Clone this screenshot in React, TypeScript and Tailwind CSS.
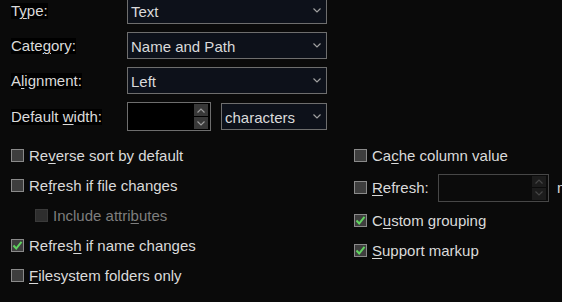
import React from "react";

function Chevron({ up = false, color = "#a0a0a0" }: { up?: boolean; color?: string }) {
  return (
    <svg width="8" height="5" viewBox="0 0 8 5" className="block">
      <path
        d={up ? "M0.5 4.5 L4 1 L7.5 4.5" : "M0.5 0.5 L4 4 L7.5 0.5"}
        fill="none"
        stroke={color}
        strokeWidth="1.2"
      />
    </svg>
  );
}

function Combo({ text, width }: { text: string; width: string }) {
  return (
    <div
      className={`${width} h-[27px] flex items-center justify-between border border-[#6e6e6e] bg-[#0d111a] pl-[3px] pr-[5px]`}
    >
      <span className="leading-none pt-[2px]">{text}</span>
      <Chevron />
    </div>
  );
}

function Spinner({ disabled = false }: { disabled?: boolean }) {
  return (
    <div
      className={`flex justify-end items-stretch border ${
        disabled ? "border-[#474747] bg-[#0b0b0b] w-[111px] h-[28px]" : "border-[#6e6e6e] bg-black w-[84px] h-[29px]"
      } p-[1px] pr-[2px]`}
    >
      <div className="flex flex-col gap-[1px] w-[14px]">
        <div
          className={`flex-1 flex items-center justify-center ${disabled ? "bg-[#1c1c1c]" : "bg-[#383838]"}`}
        >
          <Chevron up color={disabled ? "#454545" : "#9a9a9a"} />
        </div>
        <div
          className={`flex-1 flex items-center justify-center ${disabled ? "bg-[#1c1c1c]" : "bg-[#383838]"}`}
        >
          <Chevron color={disabled ? "#454545" : "#9a9a9a"} />
        </div>
      </div>
    </div>
  );
}

function Check({ checked = false, disabled = false }: { checked?: boolean; disabled?: boolean }) {
  return (
    <div
      className={`w-[13px] h-[13px] shrink-0 border ${
        disabled ? "border-[#3a3a3a] bg-[#2e2e2e]" : "border-[#8a8a8a] bg-[#3e3e3e]"
      } flex items-center justify-center`}
    >
      {checked && (
        <svg width="11" height="11" viewBox="0 0 11 11" className="block">
          <path d="M1.5 5.5 L4.2 8.5 L9.5 1.8" fill="none" stroke="#5fd35f" strokeWidth="2" />
        </svg>
      )}
    </div>
  );
}

function CheckRow({
  children,
  checked = false,
  disabled = false,
  className = "",
}: {
  children: React.ReactNode;
  checked?: boolean;
  disabled?: boolean;
  className?: string;
}) {
  return (
    <div className={`h-[30px] flex items-center gap-[5px] ${className}`}>
      <Check checked={checked} disabled={disabled} />
      <span className={`leading-none whitespace-nowrap ${disabled ? "text-[#7e7e7e]" : ""}`}>{children}</span>
    </div>
  );
}

function Label({ children }: { children: React.ReactNode }) {
  return (
    <div className="w-[116px] shrink-0 pt-[2px]">
      <span className="inline-block bg-black leading-[16px] whitespace-nowrap">{children}</span>
    </div>
  );
}

const U = ({ children }: { children: React.ReactNode }) => (
  <u className="underline underline-offset-2 decoration-1">{children}</u>
);

export default function App() {
  return (
    <div className="w-[562px] h-[302px] overflow-hidden bg-[#0a0a0a] text-[15px] text-[#dadada] font-['Liberation_Sans',Arial,sans-serif]">
      <div className="-mt-[3px] pl-[11px] flex flex-col gap-[8px]">
        <div className="flex items-center h-[27px]">
          <Label>
            T<U>y</U>pe:
          </Label>
          <Combo text="Text" width="w-[200px]" />
        </div>
        <div className="flex items-center h-[27px]">
          <Label>
            Cate<U>g</U>ory:
          </Label>
          <Combo text="Name and Path" width="w-[200px]" />
        </div>
        <div className="flex items-center h-[27px]">
          <Label>
            A<U>l</U>ignment:
          </Label>
          <Combo text="Left" width="w-[200px]" />
        </div>
        <div className="flex items-center h-[29px]">
          <Label>
            Default <U>w</U>idth:
          </Label>
          <Spinner />
          <div className="ml-[10px]">
            <Combo text="characters" width="w-[106px]" />
          </div>
        </div>
      </div>

      <div className="mt-[9px] flex">
        <div className="w-[354px] shrink-0 pl-[11px] flex flex-col">
          <CheckRow>
            Re<U>v</U>erse sort by default
          </CheckRow>
          <CheckRow>
            Re<U>f</U>resh if file changes
          </CheckRow>
          <CheckRow disabled className="pl-[24px]">
            Include attri<U>b</U>utes
          </CheckRow>
          <CheckRow checked>
            Refres<U>h</U> if name changes
          </CheckRow>
          <CheckRow>
            <U>F</U>ilesystem folders only
          </CheckRow>
        </div>
        <div className="flex-1 flex flex-col">
          <CheckRow>
            Ca<U>c</U>he column value
          </CheckRow>
          <div className="h-[35px] flex items-center">
            <div className="flex items-center gap-[5px] w-[84px] shrink-0">
              <Check />
              <span className="leading-none">
                <U>R</U>efresh:
              </span>
            </div>
            <Spinner disabled />
            <span className="ml-[8px] leading-none whitespace-nowrap">min</span>
          </div>
          <CheckRow checked>
            C<U>u</U>stom grouping
          </CheckRow>
          <CheckRow checked>
            <U>S</U>upport markup
          </CheckRow>
        </div>
      </div>
    </div>
  );
}
